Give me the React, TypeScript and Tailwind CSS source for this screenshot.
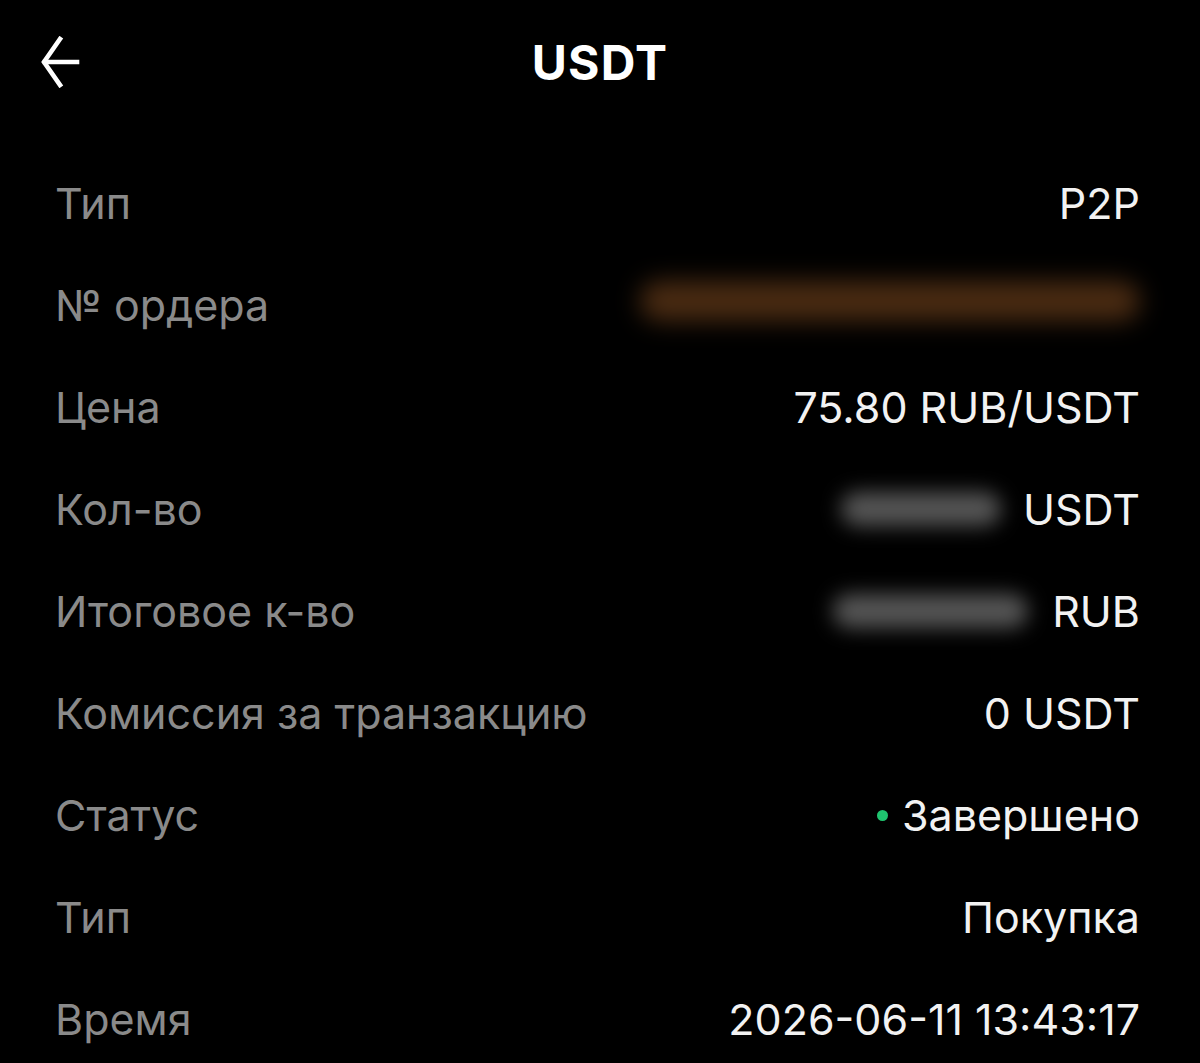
type Row = { label: string; value: React.ReactNode };

function Blur({ className }: { className: string }) {
  return <span className={`inline-block rounded-full ${className}`} />;
}

function BackArrow() {
  return (
    <svg
      viewBox="0 0 40 52"
      className="absolute left-[40px] top-[36px] h-[52px] w-[40px]"
      fill="none"
      stroke="currentColor"
      strokeWidth={4.6}
      strokeLinecap="square"
      strokeLinejoin="miter"
    >
      <path d="M20 3 L4 26 L20 49" />
      <path d="M5 26 H37" />
    </svg>
  );
}

const rows: Row[] = [
  { label: "Тип", value: "P2P" },
  {
    label: "№ ордера",
    value: <Blur className="h-[40px] w-[500px] bg-[#4a2b12] blur-[12px]" />,
  },
  { label: "Цена", value: "75.80 RUB/USDT" },
  {
    label: "Кол-во",
    value: (
      <span className="flex items-center gap-[22px]">
        <Blur className="h-[34px] w-[160px] bg-[#555555] blur-[10px]" />
        USDT
      </span>
    ),
  },
  {
    label: "Итоговое к-во",
    value: (
      <span className="flex items-center gap-[24px]">
        <Blur className="h-[34px] w-[195px] bg-[#555555] blur-[10px]" />
        RUB
      </span>
    ),
  },
  { label: "Комиссия за транзакцию", value: "0 USDT" },
  {
    label: "Статус",
    value: (
      <span className="flex items-center gap-[14px]">
        <span className="h-[11px] w-[11px] rounded-full bg-[#1fc46f]" />
        Завершено
      </span>
    ),
  },
  { label: "Тип", value: "Покупка" },
  { label: "Время", value: "2026-06-11 13:43:17" },
];

export default function App() {
  return (
    <div className="min-h-screen bg-black text-white font-['Inter','Noto_Sans',sans-serif]">
      <div className="relative flex h-[126px] items-center justify-center">
        <BackArrow />
        <h1 className="text-[48px] font-bold tracking-wide">USDT</h1>
      </div>
      <div className="pl-[55px] pr-[60px] pt-[26px]">
        {rows.map((r, i) => (
          <div key={i} className="flex h-[102px] items-center justify-between text-[43px]">
            <span className="text-[#8a8a8a]">{r.label}</span>
            <span className="text-[#f2f2f2]">{r.value}</span>
          </div>
        ))}
      </div>
    </div>
  );
}
